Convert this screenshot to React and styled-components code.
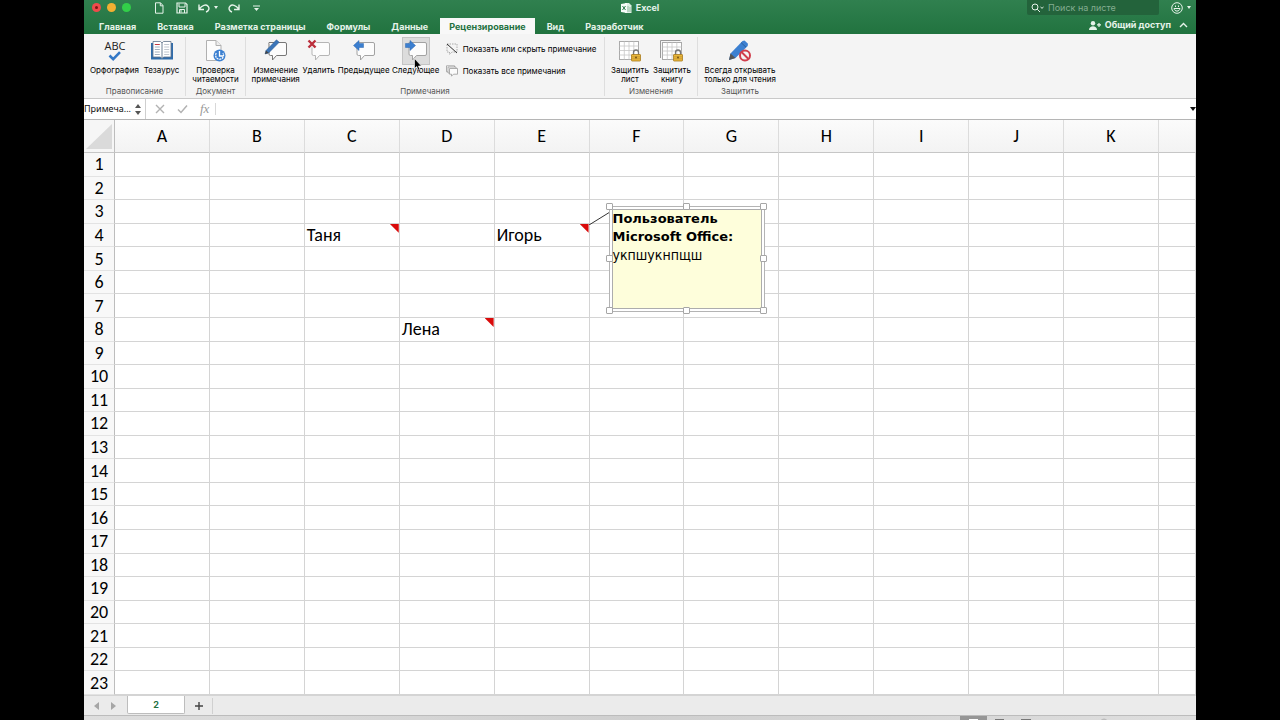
import React from "react";
import styled, { createGlobalStyle, css } from "styled-components";

const ui = `Inter, "Liberation Sans", sans-serif`;
const sheetFont = `Carlito, "Noto Sans", "Open Sans", sans-serif`;
const line = "#d4d4d4";

const Global = createGlobalStyle`
  *, *::before, *::after { box-sizing: border-box; }
  body { margin: 0; background: #000; font-family: ${ui}; color: #111; }
  button, input { font: inherit; color: inherit; border: 0; padding: 0; margin: 0; background: none; outline: none; }
  svg { display: block; flex: none; }
`;

const Shell = styled.div`
  height: 100vh;
  margin: 0 84px;
  display: flex;
  flex-direction: column;
  overflow: hidden;
  background: #fff;
`;

const Head = styled.header`
  flex: none;
  color: #e6f3ea;
  background: linear-gradient(#30804f, #21733f);
`;

const TitleBar = styled.div`
  display: grid;
  grid-template-columns: 1fr auto 1fr;
  height: 15px;
  align-items: center;
`;

const TitleLeft = styled.div`
  display: flex;
  align-items: center;
  padding-left: 8px;
`;

const Lights = styled.div`
  display: flex;
  gap: 6px;
  margin-right: 22px;
`;

const Light = styled.button`
  width: 9px;
  height: 9px;
  border-radius: 50%;
  display: grid;
  place-items: center;
  background: ${(p) => p.$color};
`;

const Dot = styled.span`
  width: 3px;
  height: 3px;
  border-radius: 50%;
  background: #7a1512;
`;

const Quick = styled.div`
  display: flex;
  align-items: center;
  gap: 10px;
`;

const IconButton = styled.button`
  display: flex;
  align-items: center;
  gap: 4px;
  color: inherit;
`;

const Title = styled.h1`
  margin: 0;
  display: flex;
  align-items: center;
  gap: 4px;
  font-size: 9px;
  line-height: 14px;
  font-weight: 700;
`;

const TitleRight = styled.div`
  display: flex;
  justify-content: flex-end;
  align-items: center;
  gap: 12px;
  padding-right: 5px;
`;

const Search = styled.label`
  display: flex;
  align-items: center;
  gap: 4px;
  width: 132px;
  height: 15px;
  padding-left: 4px;
  background: #23633b;
  border-radius: 0 0 2px 2px;
`;

const SearchInput = styled.input`
  flex: 1;
  min-width: 0;
  font-size: 9px;
  line-height: 12px;
  &::placeholder { color: #83ad91; opacity: 1; }
`;

const TabRow = styled.nav`
  display: flex;
  align-items: flex-end;
  height: 19px;
  padding: 0 8px 0 6px;
`;

const Tab = styled.button`
  height: 16px;
  padding: 0 9px;
  margin-right: 3px;
  font-size: 9px;
  line-height: 15px;
  font-weight: 700;
  white-space: nowrap;
  ${(p) => p.$active && css`background: #f8f8f8; color: #23713f;`}
`;

const Share = styled.div`
  margin-left: auto;
  display: flex;
  align-items: center;
  gap: 8px;
  height: 18px;
`;

const ShareButton = styled(IconButton)`
  font-size: 9px;
  font-weight: 700;
  line-height: 16px;
`;

const Ribbon = styled.section`
  flex: none;
  display: flex;
  height: 65px;
  padding: 3px 0 2px;
  background: #f4f4f4;
  border-bottom: 1px solid #c9c9c9;
`;

const Group = styled.div`
  display: flex;
  flex-direction: column;
  justify-content: space-between;
  width: ${(p) => p.$w}px;
  border-right: ${(p) => (p.$last ? "0" : "1px solid #dedede")};
`;

const GroupBody = styled.div`
  display: flex;
  justify-content: center;
  gap: 4px;
`;

const GroupName = styled.div`
  font-size: 8px;
  line-height: 10px;
  text-align: center;
  color: #555;
`;

const Command = styled.button`
  position: relative;
  display: flex;
  flex-direction: column;
  align-items: center;
  width: ${(p) => p.$w}px;
  font-size: 8px;
  line-height: 9px;
  font-weight: 400;
  white-space: pre;
  text-align: center;
  color: #000;
`;

const IconBox = styled.span`
  display: grid;
  place-items: center;
  width: 28px;
  height: 28px;
  margin-bottom: 1px;
  border: 1px solid ${(p) => (p.$hot ? "#c4c4c4" : "transparent")};
  background: ${(p) => (p.$hot ? "#dcdcdc" : "transparent")};
`;

const Pointer = styled.span`
  position: absolute;
  left: 20px;
  top: 21px;
`;

const SideList = styled.div`
  display: flex;
  flex-direction: column;
  padding: 5px 2px 0 4px;
  gap: 8px;
`;

const SideCommand = styled.button`
  display: flex;
  align-items: center;
  gap: 5px;
  height: 14px;
  font-size: 8px;
  line-height: 14px;
  font-weight: 400;
  white-space: nowrap;
  color: #000;
`;

const FormulaBar = styled.div`
  flex: none;
  display: flex;
  align-items: center;
  height: 21px;
  background: #fff;
  border-bottom: 1px solid #b5b5b5;
`;

const NameBox = styled.div`
  display: flex;
  align-items: center;
  width: 62px;
  height: 20px;
  border-right: 1px solid #cfcfcf;
`;

const NameInput = styled.input`
  width: 51px;
  font-family: "Noto Sans", sans-serif;
  font-size: 9px;
  line-height: 16px;
`;

const Steps = styled.div`
  display: flex;
  flex-direction: column;
  gap: 3px;
  color: #555;
`;

const FormulaTools = styled.div`
  display: flex;
  align-items: center;
  gap: 12px;
  height: 12px;
  padding: 0 6px 0 9px;
  color: #b2b2b2;
  border-right: 1px solid #d8d8d8;
`;

const Fx = styled.button`
  font-family: "Liberation Serif", serif;
  font-style: italic;
  font-size: 13px;
  line-height: 12px;
  color: #999;
`;

const FormulaInput = styled.input`
  flex: 1;
  min-width: 0;
  font-size: 10px;
`;

const Grid = styled.main`
  flex: 1;
  min-height: 0;
`;

const Sheet = styled.table`
  width: 100%;
  height: 100%;
  table-layout: fixed;
  border-collapse: separate;
  border-spacing: 0;
  font-family: ${sheetFont};
  font-size: 18px;
  line-height: 20px;
  color: #000;
`;

const Col = styled.col`
  width: ${(p) => (p.$w ? `${p.$w}px` : "auto")};
`;

const Corner = styled.th`
  height: 33px;
  padding: 0;
  background: #f6f6f6;
  border-right: 1px solid #bdbdbd;
  border-bottom: 1px solid #c6c6c6;
`;

const CornerMark = styled.svg`
  margin: 0 0 0 auto;
`;

const ColHead = styled.th`
  padding: 0;
  font-weight: 400;
  background: linear-gradient(#fbfbfb, #f3f3f3);
  border-right: 1px solid #dcdcdc;
  border-bottom: 1px solid #c6c6c6;
`;

const RowHead = styled.th`
  padding: 0;
  font-weight: 400;
  background: #f8f8f8;
  border-right: 1px solid #bdbdbd;
  border-bottom: 1px solid #e3e3e3;
`;

const Cell = styled.td`
  position: relative;
  padding: 0 2px;
  white-space: nowrap;
  border-right: 1px solid ${line};
  border-bottom: 1px solid ${line};
`;

const Flag = styled.span`
  position: absolute;
  right: 0;
  top: 0;
  width: 9px;
  height: 9px;
  background: #d90b0b;
  clip-path: polygon(0 0, 100% 0, 100% 100%);
`;

const Connector = styled.svg`
  position: absolute;
  left: 100%;
  top: -12px;
`;

const Note = styled.div`
  position: absolute;
  z-index: 1;
  left: calc(100% + 20px);
  top: -18px;
  width: 156px;
  height: 106px;
  padding: 2px;
  border: 1px solid #b4b4b4;
  background: #fff;
`;

const NoteText = styled.div`
  height: 100%;
  border: 1px solid #adadad;
  background: #fefedb;
  font-family: "DejaVu Sans Condensed", "DejaVu Sans", sans-serif;
  font-size: 14px;
  line-height: 18px;
`;

const NoteAuthor = styled.strong`
  display: block;
  font-family: "DejaVu Sans", sans-serif;
  font-size: 13px;
`;

const Handle = styled.span`
  position: absolute;
  left: ${(p) => p.$x};
  top: ${(p) => p.$y};
  width: 7px;
  height: 7px;
  margin: -4px;
  border: 1px solid #a6a6a6;
  border-radius: 1px;
  background: #fff;
`;

const SheetBar = styled.div`
  flex: none;
  display: flex;
  align-items: flex-start;
  height: 21px;
  background: #ebebeb;
  border-top: 1px solid #d4d4d4;
  border-bottom: 1px solid #bcbcbc;
`;

const Arrows = styled.div`
  display: flex;
  align-items: center;
  gap: 12px;
  height: 20px;
  padding: 0 11px 0 10px;
  color: #a6a6a6;
`;

const SheetTab = styled.button`
  width: 58px;
  height: 18px;
  background: #fff;
  border: 1px solid #bdbdbd;
  border-top: 0;
  border-radius: 0 0 2px 2px;
  color: #23713f;
  font-size: 9px;
  line-height: 16px;
  font-weight: 700;
`;

const AddSheet = styled.button`
  width: 28px;
  height: 16px;
  margin-top: 2px;
  display: grid;
  place-items: center;
  border-right: 1px solid #d0d0d0;
`;

const StatusBar = styled.footer`
  flex: none;
  display: flex;
  justify-content: flex-end;
  align-items: flex-start;
  height: 4px;
  overflow: hidden;
  background: linear-gradient(90deg, #dedede, #cfcfcf 50%, #dedede);
`;

const Caret = ({ w = 5, h = 3, up }) => (
  <svg width={w} height={h} viewBox="0 0 6 4" preserveAspectRatio="none" fill="currentColor">
    <path d={up ? "M0 4h6L3 0z" : "M0 0h6L3 4z"} />
  </svg>
);

const Bubble = ({ stroke = "#a2a2a2", children }) => (
  <svg width="24" height="24" viewBox="0 0 24 24">
    <path d="M5 3.500h16a1.500 1.500 0 0 1 1.500 1.500v10a1.500 1.500 0 0 1-1.500 1.500h-8.500l-4 4.500v-4.500H6.500A1.500 1.500 0 0 1 5 15V5A1.500 1.500 0 0 1 5 3.500z" fill="#fcfcfc" stroke={stroke} />
    {children}
  </svg>
);

const Lock = () => (
  <g>
    <path d="M15.500 16v-2.500a2.500 2.500 0 0 1 5 0V16" fill="none" stroke="#777" strokeWidth="1.300" />
    <rect x="13.500" y="15.500" width="9" height="6.500" rx=".5" fill="#e9b83d" stroke="#a87a1c" strokeWidth=".8" />
    <path d="M14 17.800h8M14 19.800h8" stroke="#b98a27" strokeWidth=".6" />
    <circle cx="18" cy="18.500" r=".9" fill="#6b4b10" />
  </g>
);

const icons = {
  spell: (
    <svg width="24" height="24" viewBox="0 0 24 24">
      <text x="12" y="11" textAnchor="middle" fontFamily="Open Sans, sans-serif" fontSize="11" fill="#222">ABC</text>
      <path d="M6.500 16.500l3.700 3.700 6.800-7" fill="none" stroke="#3478c6" strokeWidth="2.600" />
    </svg>
  ),
  book: (
    <svg width="24" height="24" viewBox="0 0 24 24">
      <path d="M1 4h22v16.500H1z" fill="#2f6cab" />
      <path d="M3 2.500h7.500L12 4l1.500-1.500H21v15.500h-7.500L12 19.500l-1.500-1.500H3z" fill="#fff" stroke="#62758b" strokeWidth=".8" />
      <path d="M12 4v15" stroke="#718296" />
      <path d="M4.800 5.500h5" stroke="#c23a40" />
      <path d="M4.800 8h5M4.800 10.500h5M4.800 13h5M4.800 15.500h5" stroke="#8b9bad" strokeWidth=".8" />
      <path d="M14.200 5.500h5M14.200 8h5M14.200 10.500h5M14.200 13h5M14.200 15.500h5" stroke="#b0b8c1" strokeWidth=".8" />
    </svg>
  ),
  access: (
    <svg width="24" height="24" viewBox="0 0 24 24">
      <path d="M2.500 1.500H12l5 5v15H2.500z" fill="#fcfcfc" stroke="#b0b0b0" />
      <path d="M12 1.500v5h5" fill="#eee" stroke="#b0b0b0" />
      <circle cx="15.500" cy="16.500" r="6" fill="#3c80d1" />
      <path d="M12.300 14a4 4 0 1 0 6.600 0" fill="none" stroke="#fff" strokeWidth="1.200" strokeDasharray="2 .7" />
      <path d="M15.500 12v5h3.500" fill="none" stroke="#fff" strokeWidth="1.300" />
    </svg>
  ),
  edit: (
    <Bubble stroke="#777">
      <path d="M1 15l1-3.500L12.500.8l2.700 2.500L4.700 13.900z" fill="#3b75b8" stroke="#2c5a91" strokeWidth=".5" />
      <path d="M1 15l1-3.500 2.700 2.400z" fill="#444" />
    </Bubble>
  ),
  remove: (
    <Bubble stroke="#b5b5b5">
      <path d="M1.500 1.500l7 7M8.500 1.500l-7 7" stroke="#f4f4f4" strokeWidth="4" />
      <path d="M1.500 1.500l7 7M8.500 1.500l-7 7" stroke="#bb2f3c" strokeWidth="2.400" />
    </Bubble>
  ),
  prev: (
    <Bubble>
      <path d="M1.500 6.500L7 1.500v3h4.500v4H7v3z" fill="#3b7fd0" stroke="#2a65ad" strokeWidth=".5" />
    </Bubble>
  ),
  next: (
    <Bubble>
      <path d="M11.500 6.500L6 1.500v3H1.500v4H6v3z" fill="#3b7fd0" stroke="#2a65ad" strokeWidth=".5" />
    </Bubble>
  ),
  sheet: (
    <svg width="24" height="24" viewBox="0 0 24 24">
      <rect x="1.500" y="2.500" width="19" height="18" fill="#fff" stroke="#aaa" />
      <path d="M1.500 7h19M1.500 11.500h19M1.500 16h19M6.300 2.500v18M11 2.500v18M15.800 2.500v18" stroke="#c6c6c6" strokeWidth=".8" />
      <Lock />
    </svg>
  ),
  workbook: (
    <svg width="24" height="24" viewBox="0 0 24 24">
      <path d="M.5 19V1.500h20" fill="none" stroke="#999" />
      <rect x="2.500" y="3.500" width="19" height="17" fill="#fff" stroke="#aaa" />
      <path d="M2.500 8h19M2.500 12h19M2.500 16h19M7.300 3.500v17M12 3.500v17M16.800 3.500v17" stroke="#c6c6c6" strokeWidth=".8" />
      <Lock />
    </svg>
  ),
  readonly: (
    <svg width="24" height="24" viewBox="0 0 24 24">
      <path d="M1 21l1.500-6.500L14.500 2l2-.5 3.500 3.200-.3 2.300L7.500 19z" fill="#3c80d1" />
      <path d="M1 21l1.500-6.500 5 4.500z" fill="#555" />
      <path d="M13 3.500l5 4.700" stroke="#2a609f" />
      <circle cx="17" cy="16.500" r="5" fill="#f4f4f4" stroke="#d03e4c" strokeWidth="2" />
      <path d="M13.500 13l7 7" stroke="#d03e4c" strokeWidth="2" />
    </svg>
  ),
};

const groups = [
  { name: "Правописание", w: 102, items: [["spell", "Орфография", 50], ["book", "Тезаурус", 36]] },
  { name: "Документ", w: 60, items: [["access", "Проверка\nчитаемости", 46]] },
  {
    name: "Примечания", w: 359, side: true,
    items: [["edit", "Изменение\nпримечания", 48], ["remove", "Удалить", 30], ["prev", "Предыдущее", 52], ["next", "Следующее", 44]],
  },
  { name: "Изменения", w: 93, items: [["sheet", "Защитить\nлист", 38], ["workbook", "Защитить\nкнигу", 38]] },
  { name: "Защитить", w: 84, items: [["readonly", "Всегда открывать\nтолько для чтения", 70]] },
];

const tabs = ["Главная", "Вставка", "Разметка страницы", "Формулы", "Данные", "Рецензирование", "Вид", "Разработчик"];
const columns = [..."ABCDEFGHIJK"];
const rows = Array.from({ length: 23 }, (_, i) => i + 1);
const values = { C4: "Таня", E4: "Игорь", D8: "Лена" };
const handles = [
  ["0%", "0%"], ["50%", "0%"], ["100%", "0%"], ["0%", "50%"],
  ["100%", "50%"], ["0%", "100%"], ["50%", "100%"], ["100%", "100%"],
];

const CellNote = () => (
  <>
    <Connector width="21" height="13" viewBox="0 0 21 13">
      <path d="M0 13L21 0" stroke="#333" />
    </Connector>
    <Note>
      <NoteText>
        <NoteAuthor>Пользователь<br />Microsoft Office:</NoteAuthor>
        укпшукнпщш
      </NoteText>
      {handles.map(([x, y]) => <Handle key={x + y} $x={x} $y={y} />)}
    </Note>
  </>
);

export default function App() {
  return (
    <>
      <Global />
      <Shell>
        <Head>
          <TitleBar>
            <TitleLeft>
              <Lights>
                <Light $color="#ee4b4b" aria-label="Закрыть"><Dot /></Light>
                <Light $color="#f3b032" aria-label="Свернуть" />
                <Light $color="#32cf49" aria-label="Развернуть" />
              </Lights>
              <Quick>
                <IconButton aria-label="Создать">
                  <svg width="13" height="12" viewBox="0 0 13 12" fill="none" stroke="currentColor"><path d="M2.500.8h5L10 3.500v7.700H2.500zM7.300.8v3H10" /></svg>
                </IconButton>
                <IconButton aria-label="Сохранить">
                  <svg width="12" height="12" viewBox="0 0 12 12" fill="none" stroke="currentColor"><path d="M1 1h8.500L11 2.500V11H1z" strokeWidth="1.200" /><path d="M3 1.500v3.500h6V1.500M3.500 11V7.500h5V11M5 8v2.500" /></svg>
                </IconButton>
                <IconButton aria-label="Отменить">
                  <svg width="12" height="12" viewBox="0 0 12 12" fill="none" stroke="currentColor" strokeWidth="1.400"><path d="M1 2.500v5h5M1.200 7.200C4 3 8 2 10 4.200s.5 5-2 5.800" /></svg>
                  <Caret w={4} />
                </IconButton>
                <IconButton aria-label="Повторить">
                  <svg width="12" height="12" viewBox="0 0 12 12" fill="none" stroke="currentColor" strokeWidth="1.400"><path d="M11 2.500v5H6M10.800 7.200C8 3 4 2 2 4.200s-.5 5 2 5.800" /></svg>
                </IconButton>
                <IconButton aria-label="Настроить панель">
                  <svg width="12" height="12" viewBox="0 0 12 12"><path d="M3 4h7" stroke="currentColor" /><path d="M4 6h5L6.500 9z" fill="currentColor" /></svg>
                </IconButton>
              </Quick>
            </TitleLeft>
            <Title>
              <svg width="11" height="12" viewBox="0 0 11 12">
                <path d="M4 1h4l2.500 2.500V11H4z" fill="#dff0e4" />
                <path d="M0 2l6-1v10l-6-1z" fill="#f7fcf8" />
                <path d="M1.500 4l3 4M4.500 4l-3 4" stroke="#2a7a49" />
                <path d="M7 4v6M9 5v5" stroke="#75a989" strokeWidth=".7" />
              </svg>
              Excel
            </Title>
            <TitleRight>
              <Search>
                <svg width="13" height="10" viewBox="0 0 13 10" fill="none" stroke="currentColor"><circle cx="4" cy="4" r="3" /><path d="M6.200 6.200L9 9M9.500 4L11 5.300 12.500 4" /></svg>
                <SearchInput aria-label="Поиск" placeholder="Поиск на листе" />
              </Search>
              <IconButton aria-label="Отзыв">
                <svg width="12" height="12" viewBox="0 0 12 12" fill="none" stroke="currentColor"><circle cx="6" cy="6" r="5.300" /><path d="M3 6.500c.5 3.400 5.500 3.400 6 0zM4.500 3.500v1.500M7.500 3.500v1.500" /></svg>
                <Caret w={4} />
              </IconButton>
            </TitleRight>
          </TitleBar>
          <TabRow>
            {tabs.map((t) => <Tab key={t} $active={t === "Рецензирование"}>{t}</Tab>)}
            <Share>
              <ShareButton>
                <svg width="12" height="9" viewBox="0 0 12 9" fill="currentColor"><circle cx="4" cy="2.300" r="2.200" /><path d="M0 9c0-5 8-5 8 0zM8 3.300h4v1.200H8z" /><path d="M9.400 2h1.200v4H9.400z" /></svg>
                Общий доступ
              </ShareButton>
              <IconButton aria-label="Свернуть ленту">
                <svg width="9" height="6" viewBox="0 0 9 6" fill="none" stroke="currentColor" strokeWidth="1.400"><path d="M1 5l3.500-3.500L8 5" /></svg>
              </IconButton>
            </Share>
          </TabRow>
        </Head>

        <Ribbon>
          {groups.map((g, i) => (
            <Group key={g.name} $w={g.w} $last={i === groups.length - 1}>
              <GroupBody>
                {g.items.map(([icon, label, w]) => (
                  <Command key={icon} $w={w}>
                    <IconBox $hot={icon === "next"}>{icons[icon]}</IconBox>
                    {label}
                    {icon === "next" && (
                      <Pointer>
                        <svg width="8" height="13" viewBox="0 0 8 13"><path d="M.5.500v10l2.200-2 1.500 3.700 1.700-.7L4.400 8h3z" fill="#000" stroke="#fff" strokeWidth=".6" /></svg>
                      </Pointer>
                    )}
                  </Command>
                ))}
                {g.side && (
                  <SideList>
                    <SideCommand>
                      <svg width="12" height="12" viewBox="0 0 12 12" fill="none"><path d="M1 1h10v8H6l-2.500 2.500V9H1z" stroke="#aaa" strokeDasharray="1.500 1" /><path d="M1 1l10 9" stroke="#333" /></svg>
                      Показать или скрыть примечание
                    </SideCommand>
                    <SideCommand>
                      <svg width="12" height="12" viewBox="0 0 12 12" fill="#fbfbfb" stroke="#999" strokeWidth=".8"><path d="M.5.800h8v6h-8z" /><path d="M2 2h8v6H2z" /><path d="M3.500 3.500h8v5.700H7.500l-2 2v-2h-2z" /></svg>
                      Показать все примечания
                    </SideCommand>
                  </SideList>
                )}
              </GroupBody>
              <GroupName>{g.name}</GroupName>
            </Group>
          ))}
        </Ribbon>

        <FormulaBar>
          <NameBox>
            <NameInput aria-label="Имя" defaultValue="Примеча..." />
            <Steps>
              <IconButton aria-label="Вверх"><Caret up w={6} h={4} /></IconButton>
              <IconButton aria-label="Вниз"><Caret w={6} h={4} /></IconButton>
            </Steps>
          </NameBox>
          <FormulaTools>
            <IconButton aria-label="Отмена"><svg width="10" height="10" viewBox="0 0 10 10" stroke="currentColor" strokeWidth="1.400"><path d="M1 1l8 8M9 1L1 9" /></svg></IconButton>
            <IconButton aria-label="Ввод"><svg width="11" height="10" viewBox="0 0 11 10" fill="none" stroke="currentColor" strokeWidth="1.500"><path d="M1 5.500L4 8.500 10 1.500" /></svg></IconButton>
            <Fx>fx</Fx>
          </FormulaTools>
          <FormulaInput aria-label="Строка формул" />
          <IconButton aria-label="Развернуть строку формул"><Caret w={6} h={4} /></IconButton>
        </FormulaBar>

        <Grid>
          <Sheet>
            <colgroup>
              <Col $w={31} />
              {columns.map((c) => <Col key={c} />)}
              <Col $w={37} />
            </colgroup>
            <thead>
              <tr>
                <Corner>
                  <CornerMark width="30" height="30" viewBox="0 0 30 30"><path d="M28 3v25H2z" fill="#dadada" /></CornerMark>
                </Corner>
                {columns.map((c) => <ColHead key={c} scope="col">{c}</ColHead>)}
                <ColHead />
              </tr>
            </thead>
            <tbody>
              {rows.map((r) => (
                <tr key={r}>
                  <RowHead scope="row">{r}</RowHead>
                  {[...columns, "L"].map((c) => {
                    const id = c + r;
                    return (
                      <Cell key={id}>
                        {values[id]}
                        {values[id] && <Flag />}
                        {id === "E4" && <CellNote />}
                      </Cell>
                    );
                  })}
                </tr>
              ))}
            </tbody>
          </Sheet>
        </Grid>

        <SheetBar>
          <Arrows>
            <IconButton aria-label="Предыдущий лист"><svg width="5" height="8" viewBox="0 0 5 8" fill="currentColor"><path d="M5 0v8L0 4z" /></svg></IconButton>
            <IconButton aria-label="Следующий лист"><svg width="5" height="8" viewBox="0 0 5 8" fill="currentColor"><path d="M0 0v8l5-4z" /></svg></IconButton>
          </Arrows>
          <SheetTab>2</SheetTab>
          <AddSheet aria-label="Добавить лист">
            <svg width="8" height="8" viewBox="0 0 8 8" stroke="#444" strokeWidth="1.400"><path d="M4 0v8M0 4h8" /></svg>
          </AddSheet>
        </SheetBar>
        <StatusBar>
          <svg width="236" height="4" viewBox="0 0 236 4">
            <path d="M0 0h27v4H0z" fill="#969696" />
            <path d="M9 3h9v1H9z" fill="#fff" />
            <path d="M35 3h9v1h-9zM61 3h10v1H61z" fill="#777" />
            <circle cx="144" cy="6" r="3.500" fill="#bbb" />
          </svg>
        </StatusBar>
      </Shell>
    </>
  );
}
